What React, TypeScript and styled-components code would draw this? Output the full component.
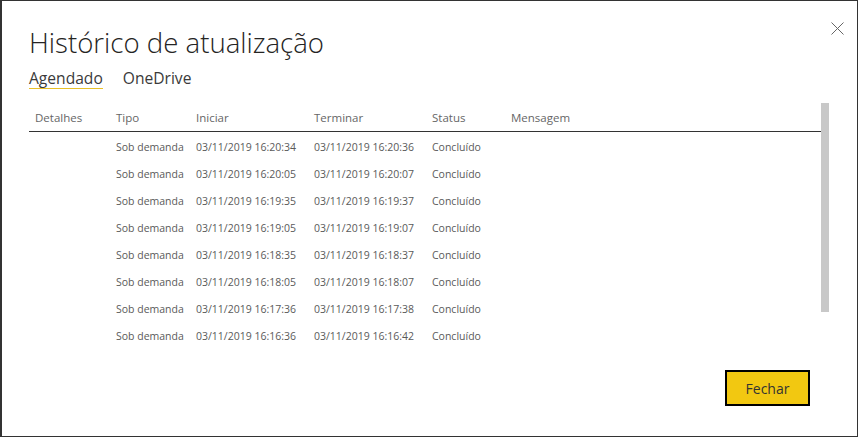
import React from "react";
import styled, { createGlobalStyle } from "styled-components";

const Global = createGlobalStyle`
  html, body { margin: 0; padding: 0; background: #ffffff; }
  body { font-family: "Open Sans", "Noto Sans", sans-serif; }
  * { box-sizing: border-box; }
`;

const Dialog = styled.div`
  position: relative;
  width: 858px;
  height: 437px;
  border: 1px solid #333333;
  border-left-width: 2px;
  background: #ffffff;
  padding: 0 0 0 27px;
  display: flex;
  flex-direction: column;
`;

const CloseButton = styled.button`
  position: absolute;
  top: 20px;
  right: 13px;
  width: 14px;
  height: 14px;
  padding: 0;
  border: none;
  background: transparent;
  display: flex;
  align-items: center;
  justify-content: center;
`;

const Title = styled.h1`
  margin: 22px 0 0 0;
  font-family: "Open Sans", sans-serif;
  font-weight: 300;
  font-size: 27.6px;
  line-height: 38px;
  color: #252423;
`;

const Tabs = styled.div`
  display: flex;
  gap: 20px;
  margin-top: 7px;
`;

const Tab = styled.div<{ $active?: boolean }>`
  font-size: 15.6px;
  line-height: 20px;
  color: #3a3a3a;
  border-bottom: 1px solid ${(p) => (p.$active ? "#e8c027" : "transparent")};
`;

const TableArea = styled.div`
  display: flex;
  margin-top: 14px;
`;

const Table = styled.div`
  width: 792px;
  display: flex;
  flex-direction: column;
`;

const Row = styled.div<{ $header?: boolean }>`
  display: grid;
  grid-template-columns: 81px 80px 118px 118px 79px 1fr;
  height: ${(p) => (p.$header ? "29px" : "27px")};
  align-items: center;
  border-bottom: ${(p) => (p.$header ? "1px solid #333333" : "none")};
  font-size: ${(p) => (p.$header ? "11.5px" : "10.5px")};
  color: ${(p) => (p.$header ? "#666666" : "#5a5a5a")};
  padding-top: ${(p) => (p.$header ? "1px" : "2px")};
`;

const Cell = styled.div`
  padding-left: 6px;
  white-space: nowrap;
`;

const Scrollbar = styled.div`
  width: 8px;
  height: 209px;
  background: #c8c8c8;
`;

const Footer = styled.div`
  margin-top: auto;
  display: flex;
  justify-content: flex-end;
  padding: 0 47px 30px 0;
`;

const Button = styled.button`
  width: 85px;
  height: 36px;
  background: #f2c811;
  border: 2px solid #000000;
  font-family: "Open Sans", sans-serif;
  font-size: 14px;
  color: #333333;
  padding: 0;
`;

const rows = [
  ["03/11/2019 16:20:34", "03/11/2019 16:20:36"],
  ["03/11/2019 16:20:05", "03/11/2019 16:20:07"],
  ["03/11/2019 16:19:35", "03/11/2019 16:19:37"],
  ["03/11/2019 16:19:05", "03/11/2019 16:19:07"],
  ["03/11/2019 16:18:35", "03/11/2019 16:18:37"],
  ["03/11/2019 16:18:05", "03/11/2019 16:18:07"],
  ["03/11/2019 16:17:36", "03/11/2019 16:17:38"],
  ["03/11/2019 16:16:36", "03/11/2019 16:16:42"],
];

export default function App() {
  return (
    <>
      <Global />
      <Dialog>
        <CloseButton aria-label="Fechar">
          <svg width="13" height="13" viewBox="0 0 13 13">
            <path d="M0.5 0.5 L12.5 12.5 M12.5 0.5 L0.5 12.5" stroke="#666" strokeWidth="1" />
          </svg>
        </CloseButton>
        <Title>Histórico de atualização</Title>
        <Tabs>
          <Tab $active>Agendado</Tab>
          <Tab>OneDrive</Tab>
        </Tabs>
        <TableArea>
          <Table>
            <Row $header>
              <Cell>Detalhes</Cell>
              <Cell>Tipo</Cell>
              <Cell>Iniciar</Cell>
              <Cell>Terminar</Cell>
              <Cell>Status</Cell>
              <Cell>Mensagem</Cell>
            </Row>
            {rows.map(([a, b]) => (
              <Row key={a}>
                <Cell />
                <Cell>Sob demanda</Cell>
                <Cell>{a}</Cell>
                <Cell>{b}</Cell>
                <Cell>Concluído</Cell>
                <Cell />
              </Row>
            ))}
          </Table>
          <Scrollbar />
        </TableArea>
        <Footer>
          <Button>Fechar</Button>
        </Footer>
      </Dialog>
    </>
  );
}
